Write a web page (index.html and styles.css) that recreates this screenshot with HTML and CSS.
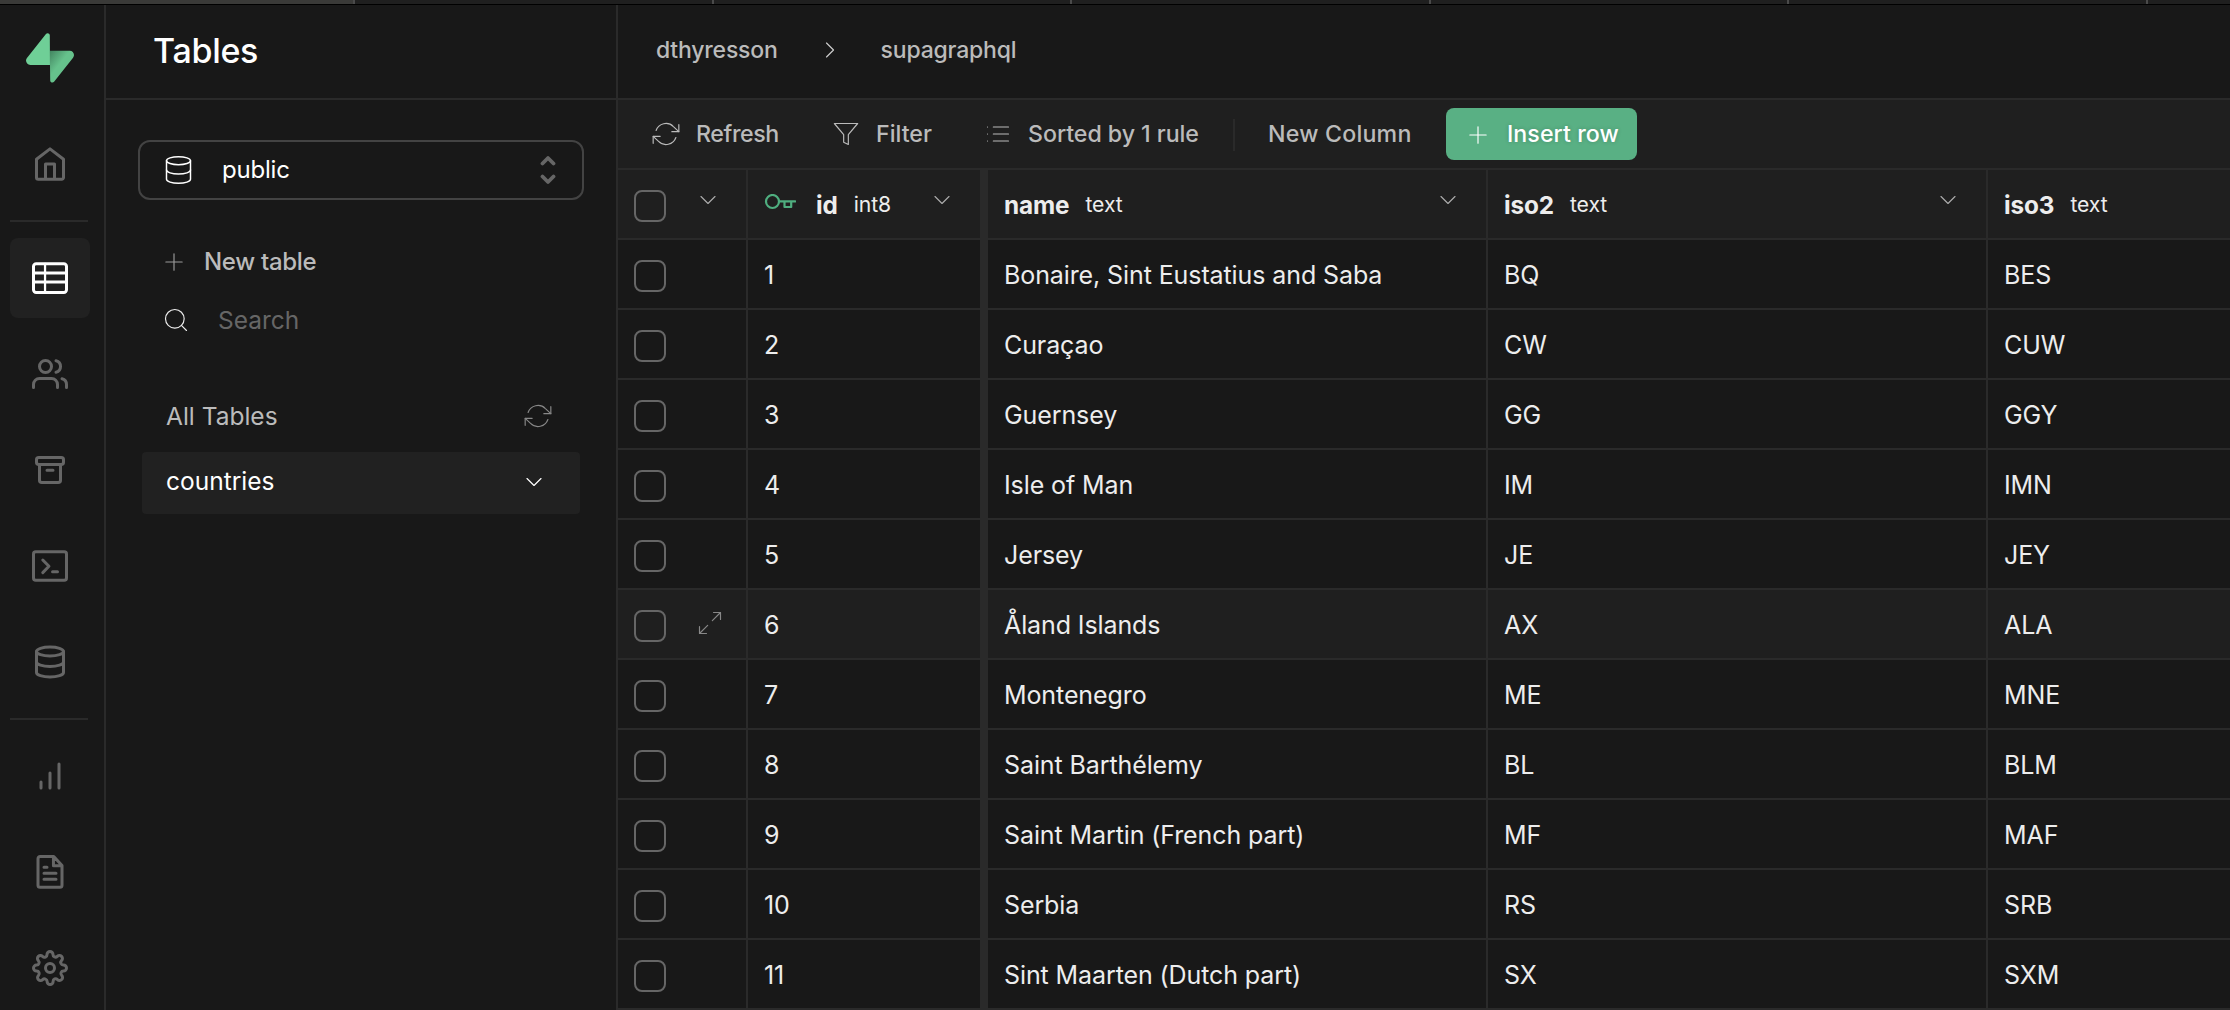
FILE: index.html
```html
<!DOCTYPE html>
<html lang="en">
<head>
<meta charset="utf-8">
<title>Tables | supagraphql</title>
<link rel="stylesheet" href="styles.css">
</head>
<body>
<svg class="sprite" aria-hidden="true">
  <symbol id="i-home" viewBox="0 0 24 24"><path d="M3 8.8 12 1.9l9 6.9V21a1.2 1.2 0 0 1-1.2 1.2H4.2A1.2 1.2 0 0 1 3 21zM9 22.200V12h6v10.200"/></symbol>
  <symbol id="i-table" viewBox="0 0 24 24"><rect x="1" y="2.500" width="22" height="19.200" rx="1.800"/><path d="M1 8.600h22M1 14.600h22"/><path stroke-width="1.500" d="M8.700 2.500v19.200"/></symbol>
  <symbol id="i-users" viewBox="0 0 24 24"><path d="M17 21v-2a4 4 0 0 0-4-4H5a4 4 0 0 0-4 4v2"/><circle cx="9" cy="7" r="4"/><path d="M23 21v-2a4 4 0 0 0-3-3.870M16 3.130a4 4 0 0 1 0 7.750"/></symbol>
  <symbol id="i-archive" viewBox="0 0 24 24"><rect x="3" y="3.700" width="18" height="4.600" rx="1.500"/><path d="M5 8.300v10.500A1.500 1.500 0 0 0 6.500 20.300h11a1.500 1.500 0 0 0 1.500-1.500V8.300M10 12.100h4"/></symbol>
  <symbol id="i-terminal" viewBox="0 0 24 24"><rect x="1" y="2.500" width="22" height="19" rx="1.500"/><path d="M7.200 8l4.100 4.200-4.100 4.200M13.700 15.800h3.300"/></symbol>
  <symbol id="i-db" viewBox="0 0 24 24"><ellipse cx="12" cy="5" rx="9" ry="3"/><path d="M21 12c0 1.660-4 3-9 3s-9-1.340-9-3"/><path d="M3 5v14c0 1.660 4 3 9 3s9-1.340 9-3V5"/></symbol>
  <symbol id="i-bars" viewBox="0 0 24 24"><path d="M12 20V10M18 20V4M6 20v-4"/></symbol>
  <symbol id="i-file" viewBox="0 0 24 24"><path d="M14.500 1.700H5.400A1.400 1.400 0 0 0 4 3.100v17.700a1.400 1.400 0 0 0 1.400 1.400h13.200a1.400 1.400 0 0 0 1.400-1.400V7.700zM14.300 1.900v6H20M8 8.900h2M8 12.900h8M8 16.900h8"/></symbol>
  <symbol id="i-gear" viewBox="0 0 24 24"><circle cx="12" cy="12" r="3"/><path d="M19.400 15a1.650 1.650 0 0 0 .33 1.820l.06.06a2 2 0 0 1-2.830 2.830l-.06-.06a1.650 1.650 0 0 0-1.820-.33 1.650 1.650 0 0 0-1 1.510V21a2 2 0 0 1-4 0v-.09A1.650 1.650 0 0 0 9 19.400a1.650 1.650 0 0 0-1.820.33l-.06.06a2 2 0 0 1-2.830-2.830l.06-.06a1.650 1.650 0 0 0 .33-1.820 1.650 1.650 0 0 0-1.510-1H3a2 2 0 0 1 0-4h.09A1.650 1.650 0 0 0 4.600 9a1.650 1.650 0 0 0-.33-1.820l-.06-.06a2 2 0 0 1 2.830-2.830l.06.06a1.650 1.650 0 0 0 1.820.33H9a1.650 1.650 0 0 0 1-1.510V3a2 2 0 0 1 4 0v.09a1.650 1.650 0 0 0 1 1.510 1.650 1.650 0 0 0 1.820-.33l.06-.06a2 2 0 0 1 2.830 2.830l-.06.06a1.650 1.650 0 0 0-.33 1.820V9a1.650 1.650 0 0 0 1.510 1H21a2 2 0 0 1 0 4h-.09a1.650 1.650 0 0 0-1.510 1z"/></symbol>
  <symbol id="i-plus" viewBox="0 0 24 24"><path d="M12 5v14M5 12h14"/></symbol>
  <symbol id="i-search" viewBox="0 0 24 24"><circle cx="11" cy="11" r="8"/><path d="M21 21l-4.350-4.350"/></symbol>
  <symbol id="i-refresh" viewBox="0 0 24 24"><path d="M23 4v6h-6M1 20v-6h6"/><path d="M3.510 9a9 9 0 0 1 14.850-3.360L23 10M1 14l4.640 4.360A9 9 0 0 0 20.490 15"/></symbol>
  <symbol id="i-filter" viewBox="0 0 24 24"><path d="M22 3H2l8 9.460V19l4 2v-8.540z"/></symbol>
  <symbol id="i-list" viewBox="0 0 24 24"><path d="M8 6h13M8 12h13M8 18h13M3 6h.01M3 12h.01M3 18h.01"/></symbol>
  <symbol id="i-down" viewBox="0 0 24 24"><path d="M6 9l6 6 6-6"/></symbol>
  <symbol id="i-right" viewBox="0 0 24 24"><path d="M9 18l6-6-6-6"/></symbol>
  <symbol id="i-expand" viewBox="0 0 24 24"><path d="M15 3h6v6M9 21H3v-6M21 3l-7 7M3 21l7-7"/></symbol>
  <symbol id="i-updown" viewBox="0 0 16 30"><path d="M2.500 8.500 8 3l5.500 5.500M2.500 21.500 8 27l5.500-5.500"/></symbol>
  <symbol id="i-key" viewBox="0 0 32 16"><circle cx="8.500" cy="7.500" r="6.500"/><path d="M15 7.300h16.200M20.500 7.300v5.700h6.700V7.300"/></symbol>
</svg>

<div class="tabstrip"><i class="active"></i><i></i><i></i><i></i><i></i><i></i></div>
<div class="app">
  <nav class="rail">
    <svg class="logo" viewBox="0 0 109 113">
      <defs><linearGradient id="shade" x1="45" y1="42" x2="78" y2="68" gradientUnits="userSpaceOnUse"><stop offset="0" stop-color="#3c7a58"/><stop offset="1" stop-color="#66c28c"/></linearGradient></defs>
      <path fill="url(#shade)" d="M63.708 110.284c-2.860 3.601-8.658 1.628-8.727-2.970l-1.007-67.251h45.220c8.190 0 12.758 9.460 7.665 15.874z"/>
      <path fill="#6fcf97" d="M45.317 2.071c2.860-3.601 8.657-1.628 8.726 2.970l.442 67.251H9.831c-8.190 0-12.759-9.460-7.665-15.875z"/>
    </svg>
    <a class="tile"><svg><use href="#i-home"/></svg></a>
    <hr>
    <a class="tile on"><svg><use href="#i-table"/></svg></a>
    <a class="tile"><svg><use href="#i-users"/></svg></a>
    <a class="tile"><svg><use href="#i-archive"/></svg></a>
    <a class="tile"><svg><use href="#i-terminal"/></svg></a>
    <a class="tile"><svg><use href="#i-db"/></svg></a>
    <hr>
    <a class="tile"><svg><use href="#i-bars"/></svg></a>
    <a class="tile"><svg><use href="#i-file"/></svg></a>
    <a class="tile"><svg><use href="#i-gear"/></svg></a>
  </nav>

  <aside class="panel">
    <header class="panel-head"><h1>Tables</h1></header>
    <div class="select"><svg class="db"><use href="#i-db"/></svg><span>public</span><svg class="updown"><use href="#i-updown"/></svg></div>
    <div class="new-table"><svg class="ico"><use href="#i-plus"/></svg><span>New table</span></div>
    <div class="search"><svg class="ico"><use href="#i-search"/></svg><span>Search</span></div>
    <div class="all"><span>All Tables</span><svg class="ico"><use href="#i-refresh"/></svg></div>
    <div class="entry"><span>countries</span><svg class="ico"><use href="#i-down"/></svg></div>
  </aside>

  <main class="main">
    <header class="crumbs"><span>dthyresson</span><svg class="ico"><use href="#i-right"/></svg><span>supagraphql</span></header>
    <div class="toolbar">
      <button class="tool refresh"><svg class="ico"><use href="#i-refresh"/></svg>Refresh</button>
      <button class="tool filter"><svg class="ico"><use href="#i-filter"/></svg>Filter</button>
      <button class="tool sort"><svg class="ico"><use href="#i-list"/></svg>Sorted by 1 rule</button>
      <span class="rule"></span>
      <button class="tool column">New Column</button>
      <button class="insert"><svg class="ico"><use href="#i-plus"/></svg>Insert row</button>
    </div>
    <div class="grid">
      <div class="row head">
        <div class="pick"><span class="box"></span><svg class="ico"><use href="#i-down"/></svg></div>
        <div class="id"><svg class="key"><use href="#i-key"/></svg><b>id</b><small>int8</small><svg class="ico"><use href="#i-down"/></svg></div>
        <div><b>name</b><small>text</small><svg class="ico"><use href="#i-down"/></svg></div>
        <div><b>iso2</b><small>text</small><svg class="ico"><use href="#i-down"/></svg></div>
        <div><b>iso3</b><small>text</small></div>
      </div>
      <div class="row"><div class="pick"><span class="box"></span></div><div class="id">1</div><div>Bonaire, Sint Eustatius and Saba</div><div>BQ</div><div>BES</div></div>
      <div class="row"><div class="pick"><span class="box"></span></div><div class="id">2</div><div>Curaçao</div><div>CW</div><div>CUW</div></div>
      <div class="row"><div class="pick"><span class="box"></span></div><div class="id">3</div><div>Guernsey</div><div>GG</div><div>GGY</div></div>
      <div class="row"><div class="pick"><span class="box"></span></div><div class="id">4</div><div>Isle of Man</div><div>IM</div><div>IMN</div></div>
      <div class="row"><div class="pick"><span class="box"></span></div><div class="id">5</div><div>Jersey</div><div>JE</div><div>JEY</div></div>
      <div class="row hover"><div class="pick"><span class="box"></span><svg class="ico"><use href="#i-expand"/></svg></div><div class="id">6</div><div>Åland Islands</div><div>AX</div><div>ALA</div></div>
      <div class="row"><div class="pick"><span class="box"></span></div><div class="id">7</div><div>Montenegro</div><div>ME</div><div>MNE</div></div>
      <div class="row"><div class="pick"><span class="box"></span></div><div class="id">8</div><div>Saint Barthélemy</div><div>BL</div><div>BLM</div></div>
      <div class="row"><div class="pick"><span class="box"></span></div><div class="id">9</div><div>Saint Martin (French part)</div><div>MF</div><div>MAF</div></div>
      <div class="row"><div class="pick"><span class="box"></span></div><div class="id">10</div><div>Serbia</div><div>RS</div><div>SRB</div></div>
      <div class="row"><div class="pick"><span class="box"></span></div><div class="id">11</div><div>Sint Maarten (Dutch part)</div><div>SX</div><div>SXM</div></div>
    </div>
  </main>
</div>
</body>
</html>
```

FILE: styles.css
```css
* { box-sizing: border-box; margin: 0; padding: 0; }

:root {
  --bg: #181818;
  --raised: #1f1f1f;
  --line: #2a2a2a;
  --muted: #bbb;
}

body {
  height: 1010px;
  overflow: hidden;
  background: var(--bg);
  color: #ededed;
  font-family: Inter, "Liberation Sans", sans-serif;
  font-size: 24.5px;
  line-height: 1;
  white-space: nowrap;
}

svg { display: block; flex: none; fill: none; stroke: currentColor; stroke-width: 2; stroke-linecap: round; stroke-linejoin: round; }
.sprite { position: absolute; width: 0; height: 0; }
.ico { width: 28px; height: 28px; stroke-width: 1; }
button { border: 0; background: none; color: inherit; font: inherit; }

/* browser tab edge */
.tabstrip { display: flex; height: 5px; border-bottom: 1px solid #000; background: #1f1f1f; }
.tabstrip i { flex: none; width: 358.600px; border-right: 2px solid #4a4a4a; }
.tabstrip .active { width: 355px; background: #3a3a38; }

.app { display: flex; height: 1005px; }

/* icon rail */
.rail { display: flex; flex: none; flex-direction: column; gap: 16px; width: 106px; padding: 28px 0 0 10px; border-right: 2px solid var(--line); color: #666; }
.logo { width: 48px; height: 50px; margin: 0 0 25px 16px; stroke: none; }
.rail hr { flex: none; width: 78px; height: 2px; border: 0; background: var(--line); }
.tile { display: flex; flex: none; align-items: center; justify-content: center; width: 80px; height: 80px; border-radius: 8px; }
.tile svg { width: 36px; height: 36px; }
.tile.on { background: #212121; color: #fff; }

/* tables panel */
.panel { display: flex; flex: none; flex-direction: column; width: 512px; border-right: 2px solid var(--line); }
.panel-head { display: flex; flex: none; align-items: center; height: 95px; padding: 0 0 1px 47px; border-bottom: 2px solid var(--line); }
.panel-head h1 { color: #fff; font-size: 34px; font-weight: 500; letter-spacing: -0.3px; }
.select { display: flex; align-items: center; height: 60px; margin: 40px 32px 0; padding: 0 26px 0 22px; border: 2px solid #434343; border-radius: 12px; color: #fff; font-size: 24px; letter-spacing: -0.2px; }
.select .db { width: 33px; height: 32px; margin-right: 27px; stroke-width: 1.100; }
.select .updown { width: 16px; height: 30px; margin-left: auto; color: #666; stroke-width: 3.800; }
.new-table, .search { display: flex; align-items: center; height: 28px; margin-left: 54px; }
.new-table { gap: 16px; margin-top: 48px; color: var(--muted); font-size: 24px; font-weight: 500; letter-spacing: -0.3px; }
.new-table svg { color: #999; }
.search { gap: 28px; margin: 30px 0 0 56px; color: #666; }
.search svg { color: #ededed; }
.search span { padding-top: 1px; }
.all { display: flex; align-items: center; justify-content: space-between; height: 28px; margin: 68px 64px 0 60px; color: var(--muted); }
.all svg { color: #888; }
.entry { display: flex; align-items: center; justify-content: space-between; height: 62px; margin: 22px 36px 0; padding: 0 32px 3px 24px; border-radius: 4px; background: #212121; color: #fff; }

/* work area */
.main { flex: 1; min-width: 0; }
.crumbs { display: flex; align-items: center; height: 95px; padding: 0 0 3px 38px; border-bottom: 2px solid var(--line); color: var(--muted); font-size: 23px; font-weight: 500; letter-spacing: -0.2px; }
.crumbs svg { margin: 0 37px 0 38px; color: #ccc; }
.toolbar { display: flex; align-items: center; height: 70px; padding: 1px 0 0 34px; border-bottom: 2px solid var(--line); background: var(--raised); color: var(--muted); font-size: 23.200px; font-weight: 500; }
.tool, .insert { display: flex; flex: none; align-items: center; }
.tool svg { margin: -1px 16px 0 0; }
.refresh { width: 180px; letter-spacing: -0.4px; }
.filter { width: 152px; }
.sort { width: 249px; letter-spacing: -0.05px; }
.rule { flex: none; width: 2px; height: 32px; background: var(--line); }
.column { width: 211px; padding-left: 33px; letter-spacing: 0.2px; }
.insert { width: 191px; height: 52px; margin-top: -1px; padding: 1px 0 0 18px; gap: 15px; border-radius: 8px; background: #59b084; color: #fff; letter-spacing: 0.05px; text-shadow: 0 0 4px rgba(0, 0, 0, .2); }

/* data grid */
.row { display: grid; grid-template-columns: 130px 240px 500px 500px 242px; height: 70px; font-size: 25px; letter-spacing: -0.1px; }
.row > div { display: flex; align-items: center; min-width: 0; padding: 2px 28px 0 16px; border-right: 2px solid var(--line); border-bottom: 2px solid var(--line); }
.row > .id { border-right-width: 8px; }
.row > div:last-child { border-right: 0; }
.row > .pick { padding: 4px 0 0 16px; }
.box { width: 32px; height: 32px; border: 2px solid #666; border-radius: 8px; }
.hover { background: var(--raised); }
.hover .ico { margin: -6px 0 0 30px; color: #888; }
.head { background: var(--raised); font-size: 24.300px; letter-spacing: -0.1px; }
.head > div { padding: 2px 24px 0 16px; }
.head b { font-weight: 700; }
.head small { margin-left: 16px; font-size: 21.200px; }
.head .ico { margin: -10px 0 0 auto; color: #aaa; }
.head .pick .ico { margin: -12px 0 0 28px; }
.head .key { width: 32px; height: 16px; margin: -6px 20px 0 0; color: #4fae7f; stroke-width: 2.200; }
.head > .id .ico { margin-right: 0; }
```
